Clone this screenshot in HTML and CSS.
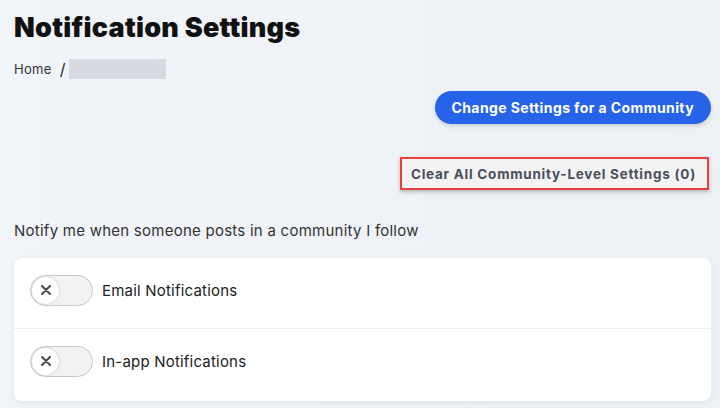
FILE: index.html
```html
<!DOCTYPE html>
<html lang="en">
<head>
    <meta charset="UTF-8">
    <meta name="viewport" content="width=device-width, initial-scale=1.0">
    <title>Notification Settings</title>
    <link rel="stylesheet" href="styles.css">
</head>
<body>

<div class="page">
    <h1>Notification Settings</h1>

    <div class="breadcrumb">
        <a href="#">Home</a>
        <span class="sep">/</span>
        <span class="crumb-blank"></span>
    </div>

    <div class="actions">
        <button class="btn-primary">Change Settings for a Community</button>
        <button class="btn-clear">Clear All Community-Level Settings (0)</button>
    </div>

    <p class="intro">Notify me when someone posts in a community I follow</p>

    <div class="card">
        <div class="row">
            <span class="toggle">
                <span class="knob">
                    <svg width="10" height="10" viewBox="0 0 10 10"><path d="M1 1L9 9M9 1L1 9" stroke="#4a4a4a" stroke-width="2" stroke-linecap="round"/></svg>
                </span>
            </span>
            <span class="row-label">Email Notifications</span>
        </div>
        <div class="row">
            <span class="toggle">
                <span class="knob">
                    <svg width="10" height="10" viewBox="0 0 10 10"><path d="M1 1L9 9M9 1L1 9" stroke="#4a4a4a" stroke-width="2" stroke-linecap="round"/></svg>
                </span>
            </span>
            <span class="row-label">In-app Notifications</span>
        </div>
    </div>
</div>

</body>
</html>
```

FILE: styles.css
```css
body {
    margin: 0;
    font-family: 'Inter', 'Noto Sans', sans-serif;
    background: linear-gradient(90deg, #f1f4f9, #edf1f6);
    color: #222;
    height: 408px;
    overflow: hidden;
}
.page {
    padding: 12px 9px 0 14px;
}
h1 {
    margin: 0;
    font-size: 27px;
    font-weight: 900;
    color: #111;
    letter-spacing: 0.25px;
    line-height: 32px;
}
.breadcrumb {
    display: flex;
    align-items: center;
    margin-top: 15px;
    font-size: 13px;
    letter-spacing: 0.3px;
    height: 20px;
}
.breadcrumb a {
    color: #333;
    text-decoration: none;
}
.sep {
    margin: 0 3px 0 8px;
    font-size: 16px;
    color: #222;
}
.crumb-blank {
    width: 97px;
    height: 20px;
    background: #d7dbe1;
}
.actions {
    display: flex;
    flex-direction: column;
    align-items: flex-end;
    margin-top: 12px;
}
.btn-primary {
    height: 33px;
    padding: 0 17px;
    border: none;
    border-radius: 17px;
    background-color: #2763e8;
    color: white;
    font-family: inherit;
    font-size: 14px;
    font-weight: 700;
    letter-spacing: 0.4px;
    box-shadow: 0 2px 4px rgba(0, 0, 0, 0.15);
    cursor: pointer;
}
.btn-clear {
    margin-top: 33px;
    margin-right: 2px;
    height: 33px;
    padding: 0 11px 0 9px;
    border: 2px solid #e8403f;
    background-color: #f3f3f4;
    color: #4a4f5c;
    font-family: inherit;
    font-size: 13.5px;
    font-weight: 700;
    letter-spacing: 0.75px;
    box-shadow: 0 2px 4px rgba(0, 0, 0, 0.25);
    cursor: pointer;
}
.intro {
    margin: 31px 0 0;
    font-size: 15px;
    letter-spacing: 0.25px;
    color: #333;
    line-height: 20px;
}
.card {
    margin-top: 17px;
    background-color: white;
    border-radius: 8px;
    box-shadow: 0 2px 6px rgba(0, 0, 0, 0.06);
}
.row {
    display: flex;
    align-items: center;
    height: 64px;
    padding: 0 0 6px 16px;
}
.row + .row {
    border-top: 1px solid #eeeeee;
    height: 64px;
    padding-bottom: 8px;
}
.toggle {
    position: relative;
    width: 61px;
    height: 29px;
    border: 1px solid #c9c9c9;
    border-radius: 16px;
    background-color: #f2f2f2;
}
.knob {
    position: absolute;
    left: 1px;
    top: 1px;
    width: 27px;
    height: 27px;
    border-radius: 50%;
    background-color: white;
    box-shadow: 0 0 2px rgba(0, 0, 0, 0.25);
    display: flex;
    align-items: center;
    justify-content: center;
}
.row-label {
    margin-left: 9px;
    font-size: 15px;
    letter-spacing: 0.2px;
    color: #222;
}
```
